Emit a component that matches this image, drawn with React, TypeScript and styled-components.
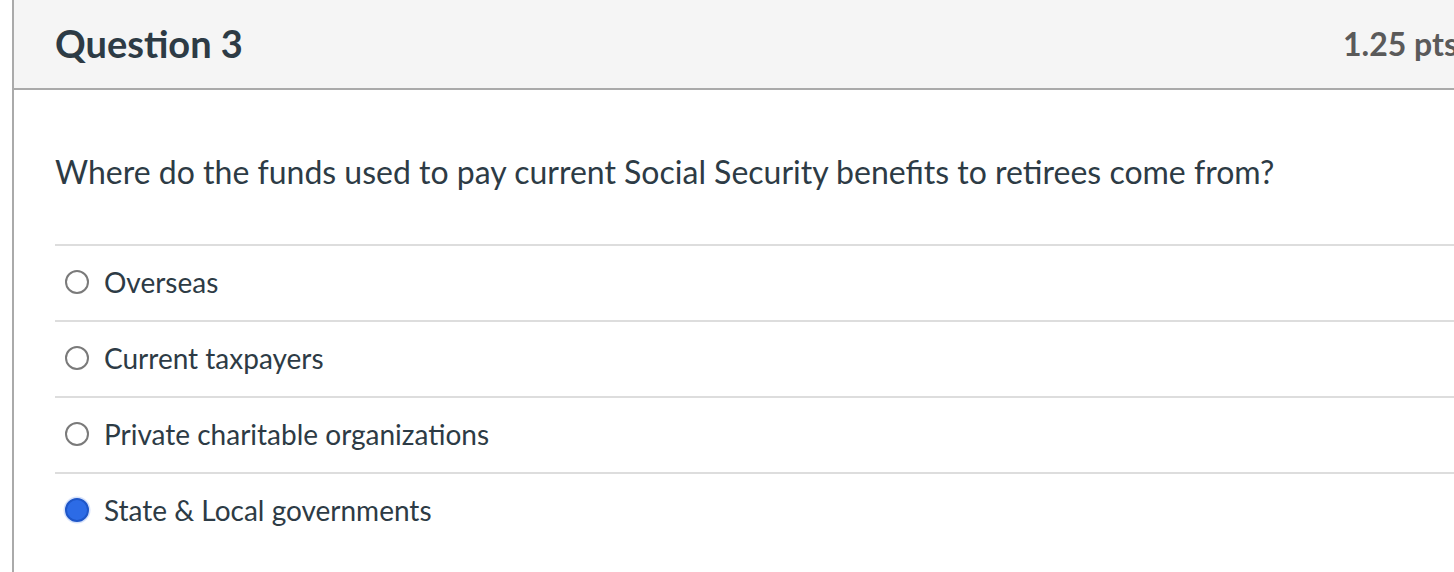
import React from "react";
import styled, { createGlobalStyle } from "styled-components";

const Global = createGlobalStyle`
  html, body { margin: 0; padding: 0; background: #ffffff; overflow: hidden; }
  body { font-family: Lato, "Noto Sans", sans-serif; color: #2d3b45; }
`;

const Page = styled.div`
  width: 1454px;
  height: 572px;
  overflow: hidden;
  padding-left: 12px;
  box-sizing: border-box;
`;

const Card = styled.div`
  width: 1480px;
  height: 572px;
  border-left: 2px solid #aaaaaa;
  box-sizing: border-box;
`;

const Header = styled.div`
  height: 90px;
  box-sizing: border-box;
  background: #f5f5f5;
  border-bottom: 2px solid #aaaaaa;
  display: flex;
  align-items: center;
  justify-content: space-between;
  padding: 0 34px 2px 41px;
`;

const Title = styled.h2`
  margin: 0;
  font-size: 38px;
  font-weight: 700;
  color: #2d3b45;
`;

const Points = styled.div`
  font-size: 32px;
  font-weight: 700;
  color: #5a5a5a;
  white-space: nowrap;
`;

const Body = styled.div`
  padding: 60px 0 0 41px;
`;

const QuestionText = styled.p`
  margin: 0 0 50px;
  font-size: 32px;
  line-height: 44px;
  color: #2d3b45;
`;

const Answers = styled.div`
  display: flex;
  flex-direction: column;
`;

const Answer = styled.label`
  display: flex;
  align-items: center;
  gap: 15px;
  height: 76px;
  border-top: 2px solid #dddddd;
  box-sizing: border-box;
  padding: 0 0 2px 10px;
  font-size: 28px;
  color: #2d3b45;
`;

const Radio = styled.span<{ $checked?: boolean }>`
  width: 24px;
  height: 24px;
  border-radius: 50%;
  box-sizing: border-box;
  flex: none;
  ${(p) =>
    p.$checked
      ? `background: #2c6be6; border: 2px solid #1e56c8; box-shadow: 0 0 0 1.5px #d6e2fb;`
      : `background: #ffffff; border: 2px solid #7a7a7a;`}
`;

const answers = [
  { text: "Overseas", checked: false },
  { text: "Current taxpayers", checked: false },
  { text: "Private charitable organizations", checked: false },
  { text: "State & Local governments", checked: true },
];

export default function App() {
  return (
    <>
      <Global />
      <Page>
        <Card>
          <Header>
            <Title>Question 3</Title>
            <Points>1.25 pts</Points>
          </Header>
          <Body>
            <QuestionText>
              Where do the funds used to pay current Social Security benefits to retirees come from?
            </QuestionText>
            <Answers>
              {answers.map((a) => (
                <Answer key={a.text}>
                  <Radio $checked={a.checked} />
                  {a.text}
                </Answer>
              ))}
            </Answers>
          </Body>
        </Card>
      </Page>
    </>
  );
}
